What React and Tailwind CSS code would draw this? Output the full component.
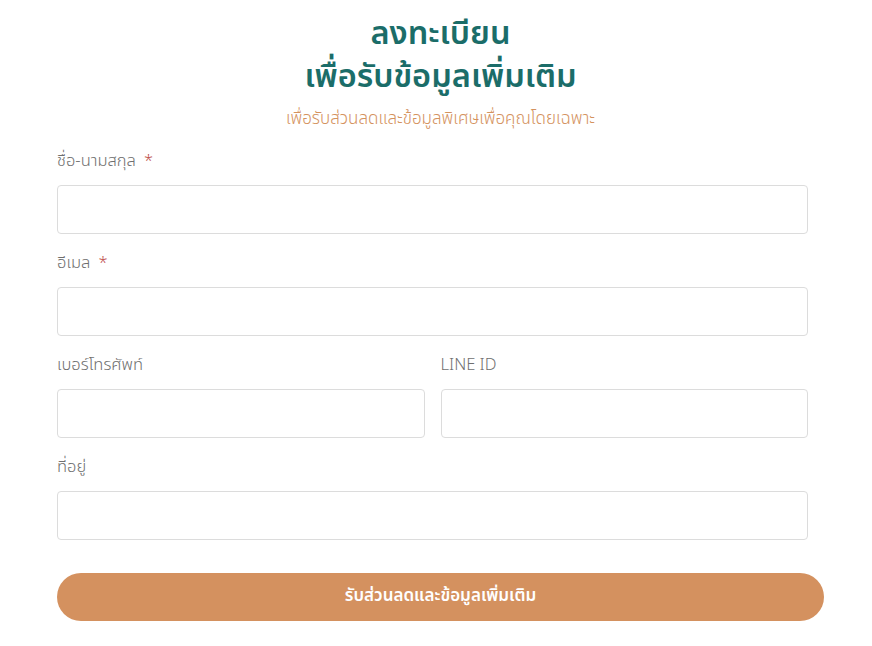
const Field = ({ label, required }) => (
  <div className="flex flex-col">
    <label className="h-[25px] text-[16.5px] font-light leading-[25px] text-[#6f6f6f]">
      {label}
      {required && <span className="ml-2 text-[#c0504d]">*</span>}
    </label>
    <input
      type="text"
      className="mt-[12px] h-[49px] w-full rounded-[4px] border border-[#dcdcdc] bg-white px-3 outline-none"
    />
  </div>
);

export default function App() {
  return (
    <div
      className="min-h-[646px] bg-white"
      style={{ fontFamily: '"Noto Sans Thai", "Noto Sans", "DejaVu Sans", sans-serif' }}
    >
      <div className="ml-[57px] flex w-[767px] flex-col pt-[13px]">
        <h1 className="text-center text-[32.5px] font-semibold leading-[43px] text-[#1b6d69]">
          ลงทะเบียน
          <br />
          เพื่อรับข้อมูลเพิ่มเติม
        </h1>
        <p className="mt-[8px] text-center text-[17px] font-light leading-[24px] text-[#d4925e]">
          เพื่อรับส่วนลดและข้อมูลพิเศษเพื่อคุณโดยเฉพาะ
        </p>

        <form className="mt-[17px] flex w-[751px] flex-col gap-[16px]">
          <Field label="ชื่อ-นามสกุล" required />
          <Field label="อีเมล" required />
          <div className="grid grid-cols-2 gap-4">
            <Field label="เบอร์โทรศัพท์" />
            <Field label="LINE ID" />
          </div>
          <Field label="ที่อยู่" />
        </form>

        <button
          type="button"
          className="mt-[33px] h-[48px] w-full rounded-full bg-[#d4915f] text-[17px] font-semibold text-white"
        >
          รับส่วนลดและข้อมูลเพิ่มเติม
        </button>
      </div>
    </div>
  );
}
